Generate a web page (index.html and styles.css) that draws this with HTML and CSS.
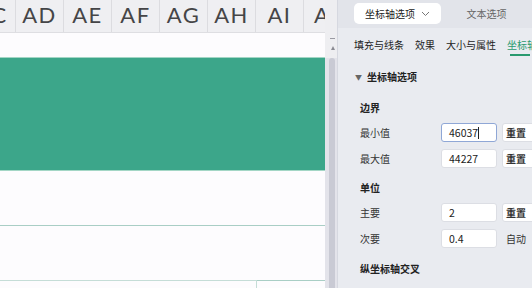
FILE: index.html
```html
<!DOCTYPE html>
<html lang="zh-CN">
<head>
  <meta charset="UTF-8">
  <title>坐标轴选项</title>
  <link rel="stylesheet" href="styles.css">
</head>
<body>
  <div class="sheet">
    <div class="col-head">
      <div class="col">AC</div>
      <div class="col">AD</div>
      <div class="col">AE</div>
      <div class="col">AF</div>
      <div class="col">AG</div>
      <div class="col">AH</div>
      <div class="col">AI</div>
      <div class="col">AJ</div>
    </div>
    <div class="row-blank"></div>
    <div class="bar"></div>
    <div class="row-gap"></div>
    <div class="row-gap"></div>
    <div class="chart-box"></div>
  </div>

  <div class="scrollbar">
    <div class="sb-top">
      <span class="sb-dash"></span>
      <span class="sb-arrow"></span>
    </div>
    <div class="sb-thumb"></div>
  </div>

  <div class="panel">
    <div class="tabs">
      <div class="tab active">坐标轴选项
        <svg width="9" height="6" viewBox="0 0 9 6"><path d="M1 1 L4.5 4.5 L8 1" fill="none" stroke="#777" stroke-width="1"/></svg>
      </div>
      <div class="tab">文本选项</div>
    </div>

    <div class="subtabs">
      <span>填充与线条</span>
      <span>效果</span>
      <span>大小与属性</span>
      <span class="current">坐标轴选项</span>
    </div>

    <div class="axis-head"><span class="caret">▼</span>坐标轴选项</div>

    <div class="group-title">边界</div>
    <div class="field">
      <label>最小值</label>
      <div class="input focus">46037<span class="cursor"></span></div>
      <button>重置</button>
    </div>
    <div class="field">
      <label>最大值</label>
      <div class="input">44227</div>
      <button>重置</button>
    </div>

    <div class="group-title unit">单位</div>
    <div class="field">
      <label>主要</label>
      <div class="input">2</div>
      <button>重置</button>
    </div>
    <div class="field">
      <label>次要</label>
      <div class="input">0.4</div>
      <span class="auto">自动</span>
    </div>

    <div class="group-title cross">纵坐标轴交叉</div>
  </div>
</body>
</html>
```

FILE: styles.css
```css
body {
  margin: 0;
  width: 532px;
  height: 288px;
  overflow: hidden;
  display: flex;
  font-family: "Noto Sans CJK SC", "Noto Sans", sans-serif;
  background-color: #e9ebf0;
}

/* spreadsheet */
.sheet {
  width: 325px;
  background-color: #fdfcfe;
  overflow: hidden;
  flex-shrink: 0;
}

.col-head {
  display: flex;
  height: 33px;
  margin-left: -32px;
  background-color: #efeff2;
  border-bottom: 1px solid #dedee2;
  box-sizing: border-box;
}

.col {
  width: 48px;
  flex-shrink: 0;
  border-right: 1px solid #dcdce0;
  box-sizing: border-box;
  text-align: center;
  font-family: "Lato", sans-serif;
  font-size: 22px;
  letter-spacing: 1.5px;
  line-height: 30px;
  color: #454547;
}

.row-blank {
  height: 24px;
}

.bar {
  height: 114px;
  background-color: #3ca68a;
  border-top: 1px solid #a3d6c5;
  border-bottom: 1px solid #a3d6c5;
  box-sizing: border-box;
}

.row-gap {
  height: 54px;
  border-bottom: 1px solid #a9cec5;
}

.chart-box {
  width: 257px;
  height: 20px;
  border: 1px solid #c5ddd7;
  border-left: none;
  box-sizing: border-box;
  margin-top: -1px;
}

/* scrollbar */
.scrollbar {
  width: 12px;
  flex-shrink: 0;
  background-color: #e3e3ea;
  border-right: 1px solid #d6d8e0;
}

.sb-top {
  height: 58px;
  background-color: #eeeef1;
  display: flex;
  flex-direction: column;
  align-items: center;
  padding-top: 38px;
  box-sizing: border-box;
}

.sb-dash {
  width: 5px;
  height: 1px;
  background-color: #9a9aa2;
  margin-left: 3px;
}

.sb-arrow {
  width: 0;
  height: 0;
  margin-top: 7px;
  margin-left: 3px;
  border-left: 2.5px solid transparent;
  border-right: 2.5px solid transparent;
  border-bottom: 4px solid #8a8a92;
}

.sb-thumb {
  margin-left: 4px;
  width: 6px;
  height: 230px;
  background-color: #c9cad4;
  border-radius: 3px 3px 0 0;
}

/* format panel */
.panel {
  flex: 1;
  overflow: hidden;
  font-size: 10px;
  color: #222;
}

.tabs {
  display: flex;
  height: 28px;
  padding: 3px 0 0 16px;
  box-sizing: border-box;
  background-color: #e2e4ea;
}

.tab {
  flex: 1;
  height: 21px;
  line-height: 21px;
  text-align: center;
  color: #666;
}

.tab.active {
  flex: 0 0 87px;
  background-color: #fff;
  border-radius: 5px;
  color: #222;
  display: flex;
  align-items: center;
  justify-content: center;
  gap: 6px;
}

.subtabs {
  display: flex;
  gap: 11px;
  height: 30px;
  padding-left: 16px;
  white-space: nowrap;
  line-height: 34px;
  color: #222;
}

.subtabs .current {
  color: #2a9a6f;
  position: relative;
}

.subtabs .current::after {
  content: "";
  position: absolute;
  left: 3px;
  width: 20px;
  top: 26px;
  height: 2px;
  background-color: #2a9a6f;
}

.axis-head {
  margin-top: 8px;
  height: 22px;
  line-height: 22px;
  padding-left: 17px;
  font-weight: bold;
}

.caret {
  font-size: 7px;
  color: #666;
  margin-right: 5px;
  vertical-align: 1px;
}

.group-title {
  margin-top: 10px;
  height: 20px;
  line-height: 20px;
  padding-left: 22px;
  font-weight: bold;
}

.group-title.cross {
  margin-top: 11px;
}

.field {
  display: flex;
  align-items: center;
  height: 20px;
  margin-top: 6px;
  padding-left: 22px;
  white-space: nowrap;
}

.group-title + .field {
  margin-top: 4px;
}

.field label {
  flex: 0 0 81px;
  color: #333;
}

.input {
  flex: 0 0 56px;
  height: 19px;
  line-height: 17px;
  background-color: #fff;
  border: 1px solid #dcdee4;
  border-radius: 3px;
  box-sizing: border-box;
  padding-left: 7px;
  font-size: 10.5px;
}

.input.focus {
  border-color: #8fa7d6;
}

.cursor {
  display: inline-block;
  width: 1px;
  height: 12px;
  background-color: #222;
  vertical-align: -2px;
}

.field button {
  flex: 0 0 40px;
  margin-left: 5px;
  height: 19px;
  background-color: #fff;
  border: 1px solid #dcdee4;
  border-radius: 3px;
  font-family: inherit;
  font-size: 10px;
  font-weight: bold;
  color: #333;
  text-align: left;
  padding: 0 0 0 3px;
}

.auto {
  margin-left: 9px;
  color: #333;
}
```
